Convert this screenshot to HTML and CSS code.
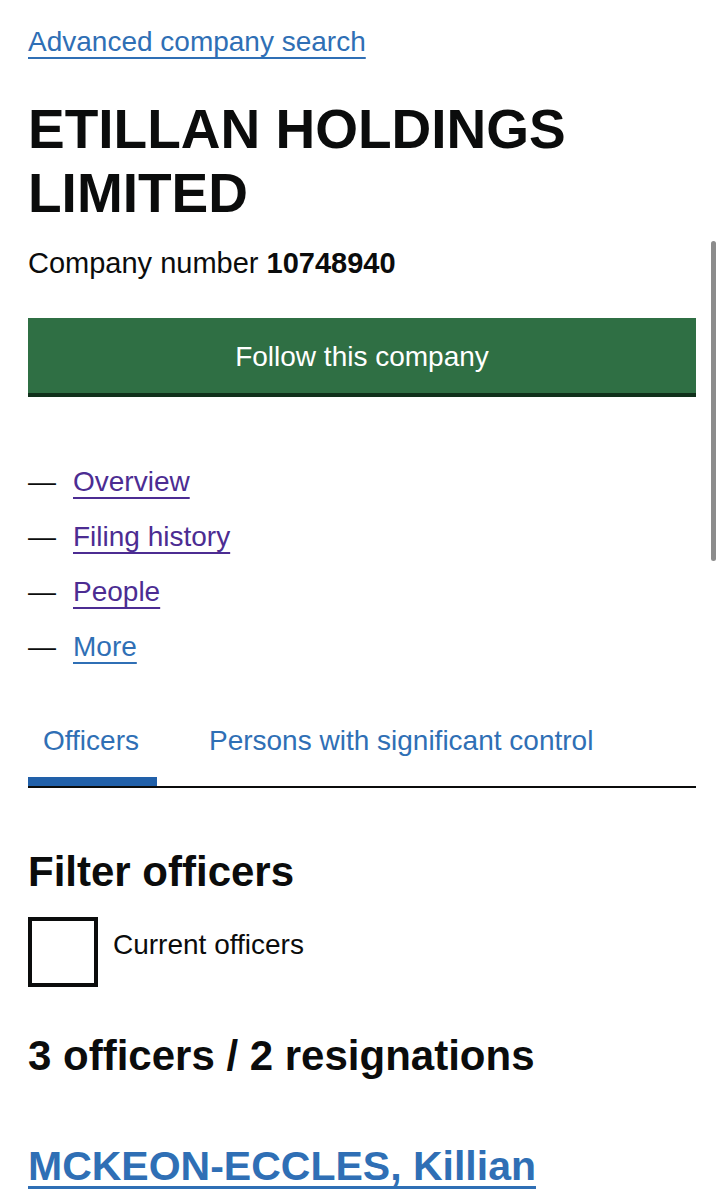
FILE: index.html
```html
<!DOCTYPE html>
<html lang="en">
<head>
<meta charset="utf-8">
<title>ETILLAN HOLDINGS LIMITED</title>
<link rel="stylesheet" href="styles.css">
</head>
<body>
<main class="page">
  <p class="back"><a class="link" href="#">Advanced company search</a></p>
  <h1 class="title">ETILLAN HOLDINGS LIMITED</h1>
  <p class="number">Company number <strong>10748940</strong></p>
  <button class="follow" type="button">Follow this company</button>
  <ul class="subnav">
    <li><span class="dash">—</span><a class="link visited" href="#">Overview</a></li>
    <li><span class="dash">—</span><a class="link visited" href="#">Filing history</a></li>
    <li><span class="dash">—</span><a class="link visited" href="#">People</a></li>
    <li><span class="dash">—</span><a class="link" href="#">More</a></li>
  </ul>
  <ul class="tabs">
    <li class="tab active"><a href="#">Officers</a></li>
    <li class="tab"><a href="#">Persons with significant control</a></li>
  </ul>
  <h2 class="heading filter">Filter officers</h2>
  <div class="check-row">
    <span class="checkbox"></span>
    <span class="check-label">Current officers</span>
  </div>
  <h2 class="heading count">3 officers / 2 resignations</h2>
  <h2 class="heading officer"><a class="link" href="#">MCKEON-ECCLES, Killian</a></h2>
</main>
<div class="scrollbar"></div>
</body>
</html>
```

FILE: styles.css
```css
html, body {
  margin: 0;
  padding: 0;
  background: #ffffff;
}
body {
  font-family: "Liberation Sans", Arial, sans-serif;
  color: #0b0c0c;
  font-size: 28px;
  line-height: 36px;
}
.page {
  padding: 24px 28px 40px 28px;
}
p, h1, h2, ul {
  margin: 0;
  padding: 0;
}
ul { list-style: none; }
.link {
  color: #2f6fb5;
  text-decoration: underline;
  text-decoration-thickness: 2px;
  text-underline-offset: 6px;
}
.link.visited { color: #4c2c92; }
.back { line-height: 36px; }
.title {
  margin-top: 37px;
  font-size: 55px;
  line-height: 64px;
  font-weight: 700;
}
.number {
  margin-top: 20px;
  font-size: 29px;
}
.number strong { font-weight: 700; }
.follow {
  display: flex;
  align-items: center;
  justify-content: center;
  width: 100%;
  height: 75px;
  margin-top: 37px;
  padding: 2px 0 0 0;
  border: 0;
  border-radius: 0;
  background: #2f6f44;
  color: #ffffff;
  font-family: inherit;
  font-size: 28px;
  line-height: 36px;
  box-shadow: 0 4px 0 #10301b;
}
.subnav {
  margin-top: 71px;
  display: flex;
  flex-direction: column;
  gap: 19px;
}
.subnav li {
  display: flex;
  align-items: baseline;
}
.dash {
  width: 45px;
  flex: none;
}
.tabs {
  margin-top: 36px;
  display: flex;
  border-bottom: 2px solid #0b0c0c;
}
.tab a {
  display: block;
  padding: 22px 18px 18px 15px;
  border-bottom: 9px solid transparent;
  color: #2f6fb5;
  text-decoration: none;
}
.tab.active a {
  border-bottom-color: #2160a9;
}
.tab + .tab {
  margin-left: 37px;
}
.heading {
  font-size: 42px;
  line-height: 50px;
  font-weight: 700;
}
.filter { margin-top: 59px; }
.check-row {
  margin-top: 20px;
  display: flex;
  align-items: flex-start;
  gap: 15px;
}
.checkbox {
  width: 70px;
  height: 70px;
  box-sizing: border-box;
  border: 4px solid #0b0c0c;
  flex: none;
}
.check-label {
  padding-top: 10px;
}
.count { margin-top: 44px; }
.officer {
  margin-top: 60px;
  font-size: 41px;
}
.officer .link {
  text-decoration-thickness: 3px;
  text-underline-offset: 6px;
}
.scrollbar {
  position: fixed;
  left: 711px;
  top: 241px;
  width: 5px;
  height: 320px;
  border-radius: 3px;
  background: #8c8c8c;
}
```
